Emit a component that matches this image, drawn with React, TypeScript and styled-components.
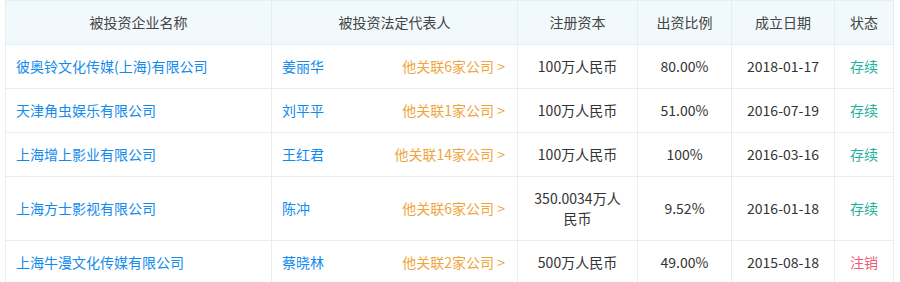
import React from 'react'
import styled, { createGlobalStyle } from 'styled-components'

const GlobalStyle = createGlobalStyle`
  body {
    margin: 0;
    background: #fff;
    font-family: "Noto Sans CJK SC", "Microsoft YaHei", sans-serif;
  }
`

const Table = styled.table`
  border-collapse: collapse;
  table-layout: fixed;
  width: 889px;
  margin-left: 5px;
  font-size: 14px;
  line-height: 20px;
  color: #333;
`

const Th = styled.th`
  background: #f2f9fc;
  border: 1px solid #e4eef6;
  font-weight: normal;
  color: #444;
  padding: 11px 6px 12px;
  text-align: center;
`

const Td = styled.td<{ $align?: 'left' | 'center' }>`
  border: 1px solid #e4eef6;
  padding: 11px 10px 12px;
  text-align: ${({ $align }) => $align || 'center'};
  vertical-align: middle;
`

const Link = styled.a`
  color: #128bed;
  text-decoration: none;
  cursor: pointer;
`

const Person = styled.div`
  display: flex;
  justify-content: space-between;
  align-items: center;
  padding-right: 2px;
`

const Related = styled.a`
  color: #f0a53c;
  text-decoration: none;
  cursor: pointer;
`

const Status = styled.span<{ $active: boolean }>`
  color: ${({ $active }) => ($active ? '#1fb2a1' : '#f05a7b')};
`

type Row = {
  company: string
  person: string
  related: number
  capital: string
  ratio: string
  date: string
  active: boolean
}

const rows: Row[] = [
  { company: '彼奥铃文化传媒(上海)有限公司', person: '姜丽华', related: 6, capital: '100万人民币', ratio: '80.00%', date: '2018-01-17', active: true },
  { company: '天津角虫娱乐有限公司', person: '刘平平', related: 1, capital: '100万人民币', ratio: '51.00%', date: '2016-07-19', active: true },
  { company: '上海增上影业有限公司', person: '王红君', related: 14, capital: '100万人民币', ratio: '100%', date: '2016-03-16', active: true },
  { company: '上海方士影视有限公司', person: '陈冲', related: 6, capital: '350.0034万人民币', ratio: '9.52%', date: '2016-01-18', active: true },
  { company: '上海牛漫文化传媒有限公司', person: '蔡晓林', related: 2, capital: '500万人民币', ratio: '49.00%', date: '2015-08-18', active: false },
]

const widths = [266, 246, 120, 94, 103, 59]
const headers = ['被投资企业名称', '被投资法定代表人', '注册资本', '出资比例', '成立日期', '状态']

const App: React.FC = () => (
  <>
    <GlobalStyle />
    <Table>
      <colgroup>
        {widths.map((w, i) => <col key={i} style={{ width: w }} />)}
      </colgroup>
      <thead>
        <tr>
          {headers.map(h => <Th key={h}>{h}</Th>)}
        </tr>
      </thead>
      <tbody>
        {rows.map(r => (
          <tr key={r.company}>
            <Td $align="left"><Link>{r.company}</Link></Td>
            <Td $align="left">
              <Person>
                <Link>{r.person}</Link>
                <Related>他关联{r.related}家公司 &gt;</Related>
              </Person>
            </Td>
            <Td>{r.capital}</Td>
            <Td>{r.ratio}</Td>
            <Td>{r.date}</Td>
            <Td><Status $active={r.active}>{r.active ? '存续' : '注销'}</Status></Td>
          </tr>
        ))}
      </tbody>
    </Table>
  </>
)

export default App
